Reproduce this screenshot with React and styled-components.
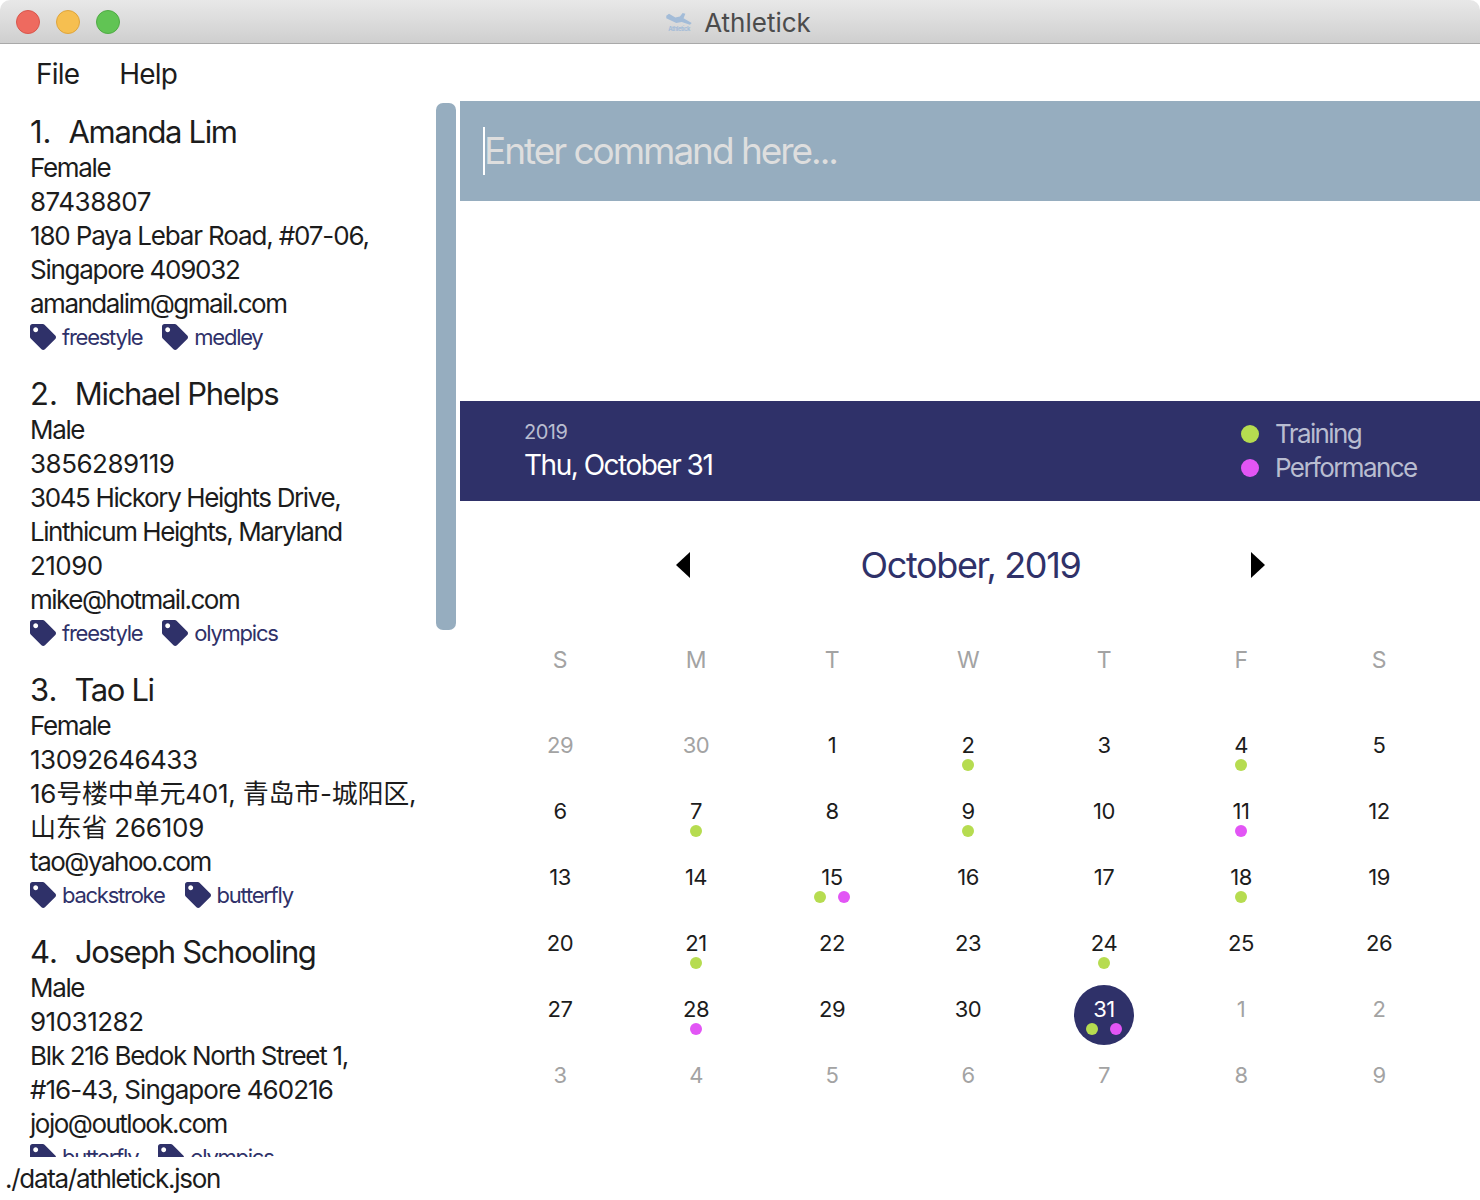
import React from 'react'
import styled, { createGlobalStyle } from 'styled-components'
import { FaTag } from 'react-icons/fa'

// fit = letter spacing that gets the line to the reference's width
const people = [
    { name: 'Amanda Lim', gender: 'Female', phone: '87438807', address: [{ text: '180 Paya Lebar Road, #07-06,', fit: -1.15 }, { text: 'Singapore 409032', fit: -1.27 }], email: 'amandalim@gmail.com', tags: ['freestyle', 'medley'] },
    { name: 'Michael Phelps', gender: 'Male', phone: '3856289119', address: [{ text: '3045 Hickory Heights Drive,', fit: -1.38 }, { text: 'Linthicum Heights, Maryland', fit: -1.45 }, { text: '21090', fit: -0.55 }], email: 'mike@hotmail.com', tags: ['freestyle', 'olympics'] },
    { name: 'Tao Li', gender: 'Female', phone: '13092646433', address: [{ text: '16号楼中单元401, 青岛市-城阳区,', fit: -0.22 }, { text: '山东省 266109', fit: -0.25 }], email: 'tao@yahoo.com', tags: ['backstroke', 'butterfly'] },
    { name: 'Joseph Schooling', gender: 'Male', phone: '91031282', address: [{ text: 'Blk 216 Bedok North Street 1,', fit: -1.29 }, { text: '#16-43, Singapore 460216', fit: -0.98 }], email: 'jojo@outlook.com', tags: ['butterfly', 'olympics'] },
]

const weekdays = ['S', 'M', 'T', 'W', 'T', 'F', 'S']

// t = training dot, p = performance dot
const days = [
    { n: 29, out: true }, { n: 30, out: true }, { n: 1 }, { n: 2, t: true }, { n: 3 }, { n: 4, t: true }, { n: 5 },
    { n: 6 }, { n: 7, t: true }, { n: 8 }, { n: 9, t: true }, { n: 10 }, { n: 11, p: true }, { n: 12 },
    { n: 13 }, { n: 14 }, { n: 15, t: true, p: true }, { n: 16 }, { n: 17 }, { n: 18, t: true }, { n: 19 },
    { n: 20 }, { n: 21, t: true }, { n: 22 }, { n: 23 }, { n: 24, t: true }, { n: 25 }, { n: 26 },
    { n: 27 }, { n: 28, p: true }, { n: 29 }, { n: 30 }, { n: 31, t: true, p: true, today: true }, { n: 1, out: true }, { n: 2, out: true },
    { n: 3, out: true }, { n: 4, out: true }, { n: 5, out: true }, { n: 6, out: true }, { n: 7, out: true }, { n: 8, out: true }, { n: 9, out: true },
]

function App() {
    return (
        <Window>
            <GlobalStyle />
            <TitleBar>
                <Lights>
                    <Light $color="#ee6a5f" $edge="#d9564c" />
                    <Light $color="#f6bf50" $edge="#dfa53c" />
                    <Light $color="#61c454" $edge="#50ab45" />
                </Lights>
                <TitleIcon viewBox="0 0 30 22">
                    <path d="M1 4l3-2 7 4 5-1 3-4 3 1-2 5 9 5-2 2-9-3-6 1-11-5z" fill="#a3bcd8" />
                    <text x="15" y="20.5" fontSize="6.5" fontWeight="700" textAnchor="middle" fill="#a3bcd8">Athletick</text>
                </TitleIcon>
                <TitleText>Athletick</TitleText>
            </TitleBar>
            <Main>
                <LeftColumn>
                    <MenuBar>
                        <MenuItem>File</MenuItem>
                        <MenuItem>Help</MenuItem>
                    </MenuBar>
                    <ListArea>
                        {people.map((person, i) => (
                            <Card key={person.name}>
                                <Name><NameIndex>{i + 1}.</NameIndex>{person.name}</Name>
                                <Line>{person.gender}</Line>
                                <Phone>{person.phone}</Phone>
                                {person.address.map(line => <Address key={line.text} $fit={line.fit}>{line.text}</Address>)}
                                <Email>{person.email}</Email>
                                <Tags>
                                    {person.tags.map(tag => (
                                        <Tag key={tag}><FaTag size={26} color="#2f3169" />{tag}</Tag>
                                    ))}
                                </Tags>
                            </Card>
                        ))}
                        <ScrollThumb />
                    </ListArea>
                    <StatusBar>./data/athletick.json</StatusBar>
                </LeftColumn>
                <RightColumn>
                    <CommandBox>
                        <Caret />
                        <Placeholder>Enter command here...</Placeholder>
                    </CommandBox>
                    <ResultArea />
                    <Banner>
                        <BannerDate>
                            <BannerYear>2019</BannerYear>
                            <BannerDay>Thu, October 31</BannerDay>
                        </BannerDate>
                        <Legend>
                            <LegendRow><Dot $kind="t" $large />Training</LegendRow>
                            <LegendRow><Dot $kind="p" $large />Performance</LegendRow>
                        </Legend>
                    </Banner>
                    <MonthHeader>
                        <Arrow viewBox="0 0 14 26"><path d="M14 0v26L0 13z" fill="#000" /></Arrow>
                        <MonthTitle>October, 2019</MonthTitle>
                        <Arrow viewBox="0 0 14 26"><path d="M0 0v26l14-13z" fill="#000" /></Arrow>
                    </MonthHeader>
                    <WeekRow>
                        {weekdays.map((d, i) => <WeekDay key={i}>{d}</WeekDay>)}
                    </WeekRow>
                    <DayGrid>
                        {days.map((d, i) => (
                            <DayCell key={i}>
                                <DayInner $today={d.today}>
                                    <DayNumber $out={d.out} $today={d.today}>{d.n}</DayNumber>
                                    <Dots>
                                        {d.t && <Dot $kind="t" />}
                                        {d.p && <Dot $kind="p" />}
                                    </Dots>
                                </DayInner>
                            </DayCell>
                        ))}
                    </DayGrid>
                </RightColumn>
            </Main>
        </Window>
    )
}

export default App

const GlobalStyle = createGlobalStyle`
    html, body {
        margin: 0;
        padding: 0;
        background: #fff;
    }
    * {
        box-sizing: border-box;
    }
`

const Window = styled.div`
    display: flex;
    flex-direction: column;
    width: 1480px;
    height: 1200px;
    overflow: hidden;
    font-family: Inter, "Noto Sans CJK SC", sans-serif;
    color: #1c1c1c;
    letter-spacing: -0.5px;
`

const TitleBar = styled.div`
    position: relative;
    display: flex;
    align-items: center;
    justify-content: center;
    gap: 11px;
    flex: none;
    height: 44px;
    padding: 1px 4px 0 0;
    border-bottom: 1px solid #a9a9a9;
    border-radius: 10px 10px 0 0;
    background: linear-gradient(to bottom, #e8e8e8, #cfcfcf);
`

const Lights = styled.div`
    position: absolute;
    left: 16px;
    top: 10px;
    display: flex;
    gap: 16px;
`

const Light = styled.div`
    width: 24px;
    height: 24px;
    border-radius: 50%;
    background: ${p => p.$color};
    border: 1px solid ${p => p.$edge};
`

const TitleIcon = styled.svg`
    width: 28px;
    height: 20px;
`

const TitleText = styled.div`
    font-size: 26px;
    letter-spacing: 0;
    color: #4c4c4c;
`

const Main = styled.div`
    display: flex;
    flex: 1;
    min-height: 0;
`

const LeftColumn = styled.div`
    display: flex;
    flex-direction: column;
    flex: none;
    width: 460px;
`

const MenuBar = styled.div`
    display: flex;
    gap: 40px;
    flex: none;
    height: 57px;
    padding: 12px 0 0 36px;
    font-size: 28px;
    line-height: 36px;
    letter-spacing: -0.8px;
`

const MenuItem = styled.div``

const ListArea = styled.div`
    position: relative;
    flex: 1;
    min-height: 0;
    padding: 12px 0 0 30px;
    overflow: hidden;
`

const ScrollThumb = styled.div`
    position: absolute;
    left: 436px;
    top: 2px;
    width: 20px;
    height: 527px;
    border-radius: 7px;
    background: #96adbf;
`

const Card = styled.div`
    margin-bottom: 20px;
`

const Name = styled.div`
    display: flex;
    font-size: 31px;
    line-height: 38px;
    letter-spacing: -1.35px;
    white-space: nowrap;
`

const NameIndex = styled.span`
    margin-right: 17px;
    letter-spacing: 0;
`

const Line = styled.div`
    font-size: 26px;
    line-height: 34px;
    letter-spacing: -1.35px;
    white-space: nowrap;
`

const Phone = styled(Line)`
    letter-spacing: -0.5px;
`

const Address = styled(Line)`
    letter-spacing: ${p => p.$fit}px;
`

const Email = styled(Line)`
    letter-spacing: -1.5px;
`

const Tags = styled.div`
    display: flex;
    gap: 20px;
    height: 34px;
    padding-bottom: 2px;
    align-items: center;
`

const Tag = styled.div`
    display: flex;
    align-items: center;
    gap: 6px;
    font-size: 22px;
    letter-spacing: -1.25px;
    color: #2f3169;
`

const StatusBar = styled.div`
    flex: none;
    height: 43px;
    padding: 3px 0 0 5px;
    font-size: 26px;
    line-height: 38px;
    letter-spacing: -1.3px;
    background: #fff;
`

const RightColumn = styled.div`
    display: flex;
    flex-direction: column;
    flex: 1;
    padding-top: 57px;
`

const CommandBox = styled.div`
    display: flex;
    align-items: center;
    flex: none;
    height: 100px;
    padding-left: 23px;
    background: #96adbf;
`

const Caret = styled.div`
    width: 2px;
    height: 48px;
    background: #fff;
`

const Placeholder = styled.div`
    margin: -2px 0 0 -1px;
    font-size: 37px;
    letter-spacing: -2.05px;
    color: #dedede;
`

const ResultArea = styled.div`
    flex: none;
    height: 200px;
`

const Banner = styled.div`
    display: flex;
    align-items: center;
    justify-content: space-between;
    flex: none;
    height: 100px;
    padding: 0 63px 0 64px;
    background: #2f3169;
`

const BannerDate = styled.div``

const BannerYear = styled.div`
    font-size: 20px;
    line-height: 28px;
    color: #b9bdd0;
`

const BannerDay = styled.div`
    font-size: 28px;
    line-height: 38px;
    letter-spacing: -1.5px;
    color: #fff;
`

const Legend = styled.div`
    width: 176px;
`

const LegendRow = styled.div`
    display: flex;
    align-items: center;
    gap: 16px;
    font-size: 26px;
    line-height: 34px;
    letter-spacing: -1.6px;
    color: #b9bdd0;
`

const Dot = styled.span`
    flex: none;
    width: ${p => (p.$large ? '18px' : '12px')};
    height: ${p => (p.$large ? '18px' : '12px')};
    border-radius: 50%;
    background: ${p => (p.$kind === 't' ? '#b6dc50' : '#e255f5')};
`

const MonthHeader = styled.div`
    display: flex;
    align-items: center;
    justify-content: space-between;
    flex: none;
    height: 128px;
    padding: 0 215px 0 216px;
`

const Arrow = styled.svg`
    width: 14px;
    height: 26px;
`

const MonthTitle = styled.div`
    font-size: 36px;
    letter-spacing: -1.37px;
    color: #2f3169;
`

const weekColumns = '136px 136px 136px 136px 136px 138px 138px'

const WeekRow = styled.div`
    display: grid;
    grid-template-columns: ${weekColumns};
    flex: none;
    height: 62px;
    padding-left: 32px;
`

const WeekDay = styled.div`
    text-align: center;
    font-size: 23px;
    line-height: 62px;
    color: #a3a3a3;
`

const DayGrid = styled.div`
    display: grid;
    grid-template-columns: ${weekColumns};
    grid-auto-rows: 66px;
    padding: 27px 0 0 32px;
`

const DayCell = styled.div`
    display: flex;
    justify-content: center;
    align-items: center;
`

const DayInner = styled.div`
    display: flex;
    flex-direction: column;
    align-items: center;
    width: 60px;
    height: 60px;
    padding-top: 10px;
    border-radius: 50%;
    background: ${p => (p.$today ? '#2f3169' : 'transparent')};
`

const DayNumber = styled.div`
    font-size: 22px;
    line-height: 28px;
    color: ${p => (p.$today ? '#fff' : p.$out ? '#a3a3a3' : '#1c1c1c')};
`

const Dots = styled.div`
    display: flex;
    justify-content: center;
    gap: 12px;
    height: 12px;
`
